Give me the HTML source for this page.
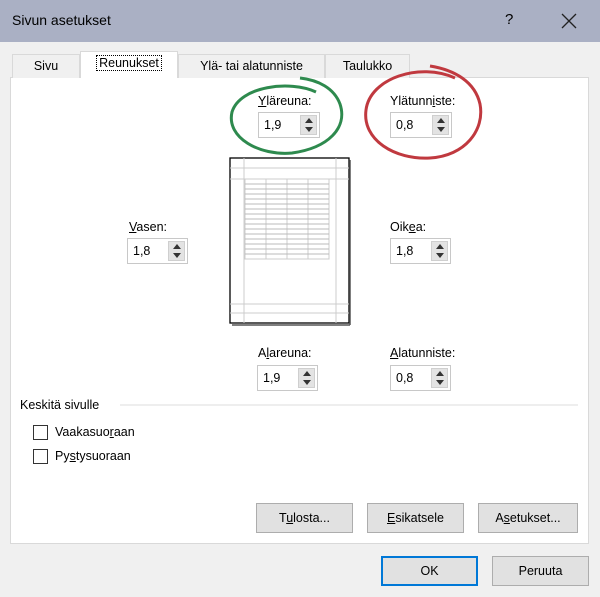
<!DOCTYPE html>
<html><head><meta charset="utf-8"><style>
*{box-sizing:border-box}
body{margin:0;width:600px;height:597px;background:#f0f0f0;font-family:"Liberation Sans",sans-serif;font-size:12.5px;color:#000;position:relative;overflow:hidden}
.a{position:absolute}
.title{left:0;top:0;width:600px;height:42px;background:#aab0c4}
.panel{left:10px;top:77px;width:579px;height:467px;background:#fff;border:1px solid #d9d9d9}
.tab{top:54px;height:24px;border:1px solid #d9d9d9;border-bottom:none;background:#f0f0f0;text-align:center;line-height:22px}
.tab.sel{top:51px;height:27px;background:#fff;z-index:2}
.box{height:26px;border:1px solid #c8c8c8;background:#fff;padding:5px 0 0 5px}
.sp{position:absolute;right:2px;top:2px;width:17px;height:20px;background:#e3e3e3;border:1px solid #cfcfcf}
.sp:before{content:"";position:absolute;left:4px;top:2px;border:4px solid transparent;border-bottom:5px solid #333;border-top:none}
.sp:after{content:"";position:absolute;left:4px;bottom:2px;border:4px solid transparent;border-top:5px solid #333;border-bottom:none}
.btn{height:30px;border:1px solid #adadad;background:#e1e1e1;text-align:center;line-height:28px}
.cb{width:15px;height:15px;border:1px solid #333;background:#fff}
u{text-decoration:underline}
</style></head><body>
<div class="a title"></div>
<div class="a" style="left:12px;top:12px;font-size:14px">Sivun asetukset</div>
<div class="a" style="left:505px;top:11px;font-size:15px">?</div>
<svg class="a" style="left:561px;top:13px" width="16" height="16"><path d="M1 1L15 15M15 1L1 15" stroke="#222" stroke-width="1.3"/></svg>
<div class="a panel"></div>
<div class="a tab" style="left:12px;width:68px">Sivu</div>
<div class="a tab sel" style="left:80px;width:98px"><span style="border:1px dotted #000;padding:0 2px">Reunukset</span></div>
<div class="a tab" style="left:178px;width:147px">Ylä- tai alatunniste</div>
<div class="a tab" style="left:325px;width:85px">Taulukko</div>

<div class="a" style="left:258px;top:94px"><u>Y</u>läreuna:</div>
<div class="a box" style="left:258px;top:112px;width:62px">1,9<div class="sp"></div></div>
<div class="a" style="left:390px;top:94px">Ylätunn<u>i</u>ste:</div>
<div class="a box" style="left:390px;top:112px;width:62px">0,8<div class="sp"></div></div>
<div class="a" style="left:129px;top:220px"><u>V</u>asen:</div>
<div class="a box" style="left:127px;top:238px;width:61px">1,8<div class="sp"></div></div>
<div class="a" style="left:390px;top:220px">Oik<u>e</u>a:</div>
<div class="a box" style="left:390px;top:238px;width:61px">1,8<div class="sp"></div></div>
<div class="a" style="left:258px;top:346px">A<u>l</u>areuna:</div>
<div class="a box" style="left:257px;top:365px;width:61px">1,9<div class="sp"></div></div>
<div class="a" style="left:390px;top:346px"><u>A</u>latunniste:</div>
<div class="a box" style="left:390px;top:365px;width:61px">0,8<div class="sp"></div></div>

<svg class="a" style="left:0;top:0" width="600" height="597">
<g fill="none">
<rect x="230" y="158" width="119" height="165" stroke="#000" stroke-width="1.3"/>
<line x1="350" y1="160" x2="350" y2="325" stroke="#555" stroke-width="1.5"/>
<line x1="232" y1="325" x2="350" y2="325" stroke="#555" stroke-width="1.5"/>
<g stroke="#ccc">
<line x1="244" y1="158" x2="244" y2="323"/><line x1="336" y1="158" x2="336" y2="323"/>
<line x1="230" y1="168" x2="349" y2="168"/><line x1="230" y1="179" x2="349" y2="179"/>
<line x1="230" y1="304" x2="349" y2="304"/><line x1="230" y1="313" x2="349" y2="313"/>
<rect x="245" y="179" width="84" height="80"/>
<line x1="266" y1="179" x2="266" y2="259"/><line x1="287" y1="179" x2="287" y2="259"/><line x1="308" y1="179" x2="308" y2="259"/>
</g>
<g stroke="#bbb">
<line x1="245" y1="184" x2="329" y2="184"/><line x1="245" y1="189" x2="329" y2="189"/><line x1="245" y1="194" x2="329" y2="194"/><line x1="245" y1="199" x2="329" y2="199"/><line x1="245" y1="204" x2="329" y2="204"/><line x1="245" y1="209" x2="329" y2="209"/><line x1="245" y1="214" x2="329" y2="214"/><line x1="245" y1="219" x2="329" y2="219"/><line x1="245" y1="224" x2="329" y2="224"/><line x1="245" y1="229" x2="329" y2="229"/><line x1="245" y1="234" x2="329" y2="234"/><line x1="245" y1="239" x2="329" y2="239"/><line x1="245" y1="244" x2="329" y2="244"/><line x1="245" y1="249" x2="329" y2="249"/><line x1="245" y1="254" x2="329" y2="254"/>
</g>
<path d="M316 92 C290 80 240 86 232 112 C226 138 260 156 292 153 C328 148 348 128 340 104 C334 88 318 80 300 78" stroke="#2e8a4e" stroke-width="3"/>
<path d="M455 78 C420 62 370 78 366 110 C362 140 395 160 430 158 C465 156 485 130 480 104 C475 82 455 70 430 66" stroke="#c0393f" stroke-width="3"/>
<line x1="120" y1="405" x2="578" y2="405" stroke="#ddd"/>
</g></svg>

<div class="a" style="left:20px;top:398px;background:#fff;padding-right:4px">Keskitä sivulle</div>
<div class="a cb" style="left:33px;top:425px"></div>
<div class="a" style="left:55px;top:425px">Vaakasuo<u>r</u>aan</div>
<div class="a cb" style="left:33px;top:449px"></div>
<div class="a" style="left:55px;top:449px">Py<u>s</u>tysuoraan</div>

<div class="a btn" style="left:256px;top:503px;width:97px">T<u>u</u>losta...</div>
<div class="a btn" style="left:367px;top:503px;width:97px"><u>E</u>sikatsele</div>
<div class="a btn" style="left:478px;top:503px;width:100px">A<u>s</u>etukset...</div>
<div class="a btn" style="left:381px;top:556px;width:97px;border:2px solid #0078d7;line-height:26px">OK</div>
<div class="a btn" style="left:492px;top:556px;width:97px">Peruuta</div>
</body></html>
